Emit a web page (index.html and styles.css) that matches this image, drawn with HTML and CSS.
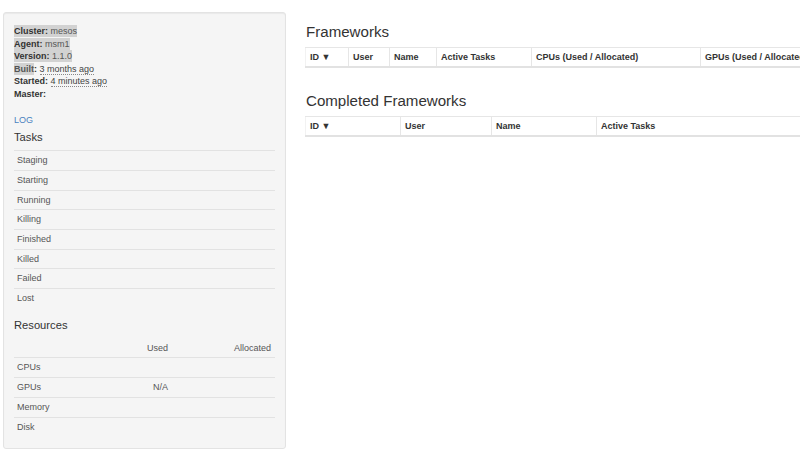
FILE: index.html
```html
<!DOCTYPE html>
<html>
<head>
<meta charset="utf-8">
<link rel="stylesheet" href="styles.css">
</head>
<body>
<div class="page">
  <aside class="well">
    <dl class="info">
      <div><span class="hl"><b>Cluster:</b> mesos </span></div>
      <div><span class="hl"><b>Agent:</b> msm1 </span></div>
      <div><span class="hl"><b>Version:</b> 1.1.0 </span></div>
      <div><b><span class="hl">Built</span>:</b> <span class="abbr">3 months ago</span></div>
      <div><b>Started:</b> <span class="abbr">4 minutes ago</span></div>
      <div><b>Master:</b></div>
    </dl>
    <a class="log" href="#">LOG</a>
    <h4 class="side-title">Tasks</h4>
    <table class="side-table tasks">
      <tbody>
        <tr><td>Staging</td></tr>
        <tr><td>Starting</td></tr>
        <tr><td>Running</td></tr>
        <tr><td>Killing</td></tr>
        <tr><td>Finished</td></tr>
        <tr><td>Killed</td></tr>
        <tr><td>Failed</td></tr>
        <tr><td>Lost</td></tr>
      </tbody>
    </table>
    <h4 class="side-title res-title">Resources</h4>
    <table class="side-table resources">
      <colgroup><col class="c1"><col class="c2"><col class="c3"></colgroup>
      <thead>
        <tr><th></th><th class="r">Used</th><th class="r">Allocated</th></tr>
      </thead>
      <tbody>
        <tr><td>CPUs</td><td class="r"></td><td class="r"></td></tr>
        <tr><td>GPUs</td><td class="r">N/A</td><td class="r"></td></tr>
        <tr><td>Memory</td><td class="r"></td><td class="r"></td></tr>
        <tr><td>Disk</td><td class="r"></td><td class="r"></td></tr>
      </tbody>
    </table>
  </aside>
  <main class="main">
    <h3 class="title">Frameworks</h3>
    <table class="fw-table fw-active">
      <colgroup>
        <col style="width:43px"><col style="width:41px"><col style="width:47px"><col style="width:95px"><col style="width:169px"><col style="width:160px">
      </colgroup>
      <thead>
        <tr><th>ID ▼</th><th>User</th><th>Name</th><th>Active Tasks</th><th>CPUs (Used / Allocated)</th><th>GPUs (Used / Allocated)</th></tr>
      </thead>
    </table>
    <h3 class="title second">Completed Frameworks</h3>
    <table class="fw-table fw-done">
      <colgroup>
        <col style="width:95px"><col style="width:91px"><col style="width:105px"><col style="width:220px">
      </colgroup>
      <thead>
        <tr><th>ID ▼</th><th>User</th><th>Name</th><th>Active Tasks</th></tr>
      </thead>
    </table>
  </main>
</div>
</body>
</html>
```

FILE: styles.css
```css
html, body {
  margin: 0;
  padding: 0;
  overflow: hidden;
  background: #fff;
}
body {
  font-family: "Liberation Sans", Arial, sans-serif;
  color: #333;
  font-size: 9px;
  line-height: 12.6px;
}
.page {
  display: flex;
  align-items: flex-start;
  padding: 12px 0 0 3px;
  width: 1400px;
}
.well {
  flex: 0 0 auto;
  box-sizing: border-box;
  width: 283px;
  height: 437px;
  padding: 12px 10px 11px;
  background: #f5f5f5;
  border: 1px solid #e3e3e3;
  border-radius: 3px;
  box-shadow: inset 0 1px 1px rgba(0,0,0,0.05);
}
.info {
  margin: 0 0 13px;
}
.info div {
  height: 12.6px;
  white-space: nowrap;
}
.info b {
  font-weight: bold;
  color: #333;
}
.hl {
  background: #d2d2d2;
  color: #555;
  padding: 1px 0;
}
.hl b { color: #333; }
.abbr {
  color: #444;
  border-bottom: 1px dotted #888;
}
.log {
  display: block;
  color: #4a82bf;
  text-decoration: none;
  height: 12.6px;
}
.side-title {
  margin: 5px 0 7px;
  font-size: 11.2px;
  font-weight: normal;
  line-height: 12.1px;
  color: #333;
}
.res-title {
  margin-top: 11.3px;
  margin-bottom: 7.5px;
}
.side-table {
  width: 100%;
  border-collapse: collapse;
  color: #555;
}
.side-table td, .side-table th {
  padding: 3px 3px;
  line-height: 12.7px;
  font-weight: normal;
  text-align: left;
}
.side-table tbody td {
  border-top: 1px solid #e2e2e2;
}
.side-table .r { text-align: right; }
.resources { table-layout: fixed; }
.resources .c1 { width: 73px; }
.resources .c2 { width: 85px; }
.resources .c3 { width: 103px; }
.resources th.r:nth-child(2), .resources td.r:nth-child(2) { padding-right: 4px; }
.resources th.r:nth-child(3) { padding-right: 4px; }

.main {
  margin-left: 19px;
  flex: 0 0 auto;
}
.title {
  margin: 12px 0 6.5px 1px;
  font-size: 15.1px;
  line-height: 16.5px;
  font-weight: normal;
  color: #333;
}
.title.second {
  margin-top: 25px;
}
.fw-table {
  border-collapse: collapse;
  table-layout: fixed;
}
.fw-active { width: 555px; }
.fw-done { width: 511px; }
.fw-table th {
  text-align: left;
  font-weight: bold;
  color: #333;
  padding: 3px 4px;
  line-height: 12px;
  border: 1px solid #e6e6e6;
  border-bottom: 2px solid #e2e2e2;
  white-space: nowrap;
  overflow: hidden;
}
.fw-table th:first-child { border-left-color: #f2f2f2; }
```
